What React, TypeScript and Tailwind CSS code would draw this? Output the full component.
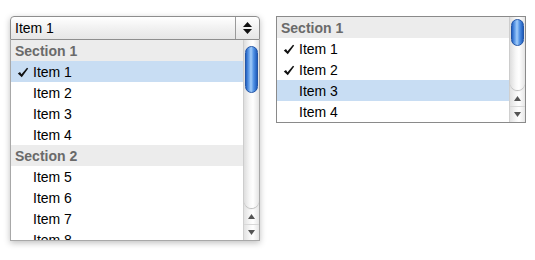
import React from "react";

const font = { fontFamily: '"Liberation Sans", Arial, sans-serif' };

function Check() {
  return (
    <svg width="12" height="11" viewBox="0 0 12 11" className="shrink-0">
      <path d="M0.8 6.4 L3 5 L4.5 7.3 L10 0.8 L11.2 1.6 L4.8 10.2 Z" fill="#111" />
    </svg>
  );
}

function Section({ label }: { label: string }) {
  return (
    <div className="h-[21px] shrink-0 flex items-center pt-[1px] pl-[4px] bg-[#ececec] text-[14px] font-bold text-[#6a6a6a]">
      {label}
    </div>
  );
}

function Row({ label, checked, selected }: { label: string; checked?: boolean; selected?: boolean }) {
  return (
    <div className={`h-[21px] shrink-0 flex items-center pt-[1px] text-[14px] text-black ${selected ? "bg-[#c8ddf3]" : "bg-white"}`}>
      <div className="w-[22px] flex justify-end pr-[4px]">{checked ? <Check /> : null}</div>
      <span>{label}</span>
    </div>
  );
}

function Tri({ up }: { up?: boolean }) {
  return (
    <svg width="7" height="5" viewBox="0 0 7 5">
      <path d={up ? "M3.5 0 L7 5 L0 5 Z" : "M0 0 L7 0 L3.5 5 Z"} fill="#555" />
    </svg>
  );
}

function Scrollbar({ thumbTop, thumbH }: { thumbTop: number; thumbH: number }) {
  return (
    <div className="w-[16px] h-full flex flex-col border-l border-[#d0d0d0] bg-[linear-gradient(90deg,#e2e2e2,#f7f7f7_40%,#ffffff_60%,#e6e6e6)]">
      <div className="flex-1 flex flex-col rounded-b-[8px] shadow-[0_1px_1px_#b8b8b8] bg-[linear-gradient(90deg,#dedede,#f8f8f8_40%,#ffffff_60%,#e4e4e4)]">
        <div style={{ height: thumbTop }} />
        <div
          className="mx-[1px] rounded-full border border-[#2456a6] bg-[linear-gradient(90deg,#2262c4,#6fa8ee_30%,#a3cdf9_45%,#4f90e4_70%,#1f5cbb)]"
          style={{ height: thumbH }}
        />
      </div>
      <div className="h-[16px] flex items-center justify-center border-b border-[#d8d8d8] mt-[1px]">
        <Tri up />
      </div>
      <div className="h-[15px] flex items-center justify-center">
        <Tri />
      </div>
    </div>
  );
}

export default function App() {
  return (
    <div className="w-[535px] h-[260px] bg-white flex items-start pl-[10px] pt-[16px] gap-[16px]" style={font}>
      {/* Popup combo */}
      <div className="w-[250px] flex flex-col shadow-[0_2px_6px_rgba(0,0,0,0.25)] rounded-t-[4px]">
        <div className="h-[24px] flex border border-[#8e8e8e] rounded-t-[4px] bg-[linear-gradient(180deg,#ffffff,#f1f1f1_50%,#e6e6e6)]">
          <div className="flex-1 flex items-center pl-[4px] text-[14px] text-black">Item 1</div>
          <div className="w-[24px] border-l border-[#9a9a9a] flex flex-col items-center justify-center">
            <svg width="9" height="12" viewBox="0 0 9 12">
              <path d="M4.5 0 L9 5 L0 5 Z" fill="#111" />
              <path d="M0 7 L9 7 L4.5 12 Z" fill="#111" />
            </svg>
          </div>
        </div>
        <div className="h-[201px] flex border-x border-b border-[#a8a8a8] overflow-hidden bg-white">
          <div className="flex-1 flex flex-col overflow-hidden">
            <Section label="Section 1" />
            <Row label="Item 1" checked selected />
            <Row label="Item 2" />
            <Row label="Item 3" />
            <Row label="Item 4" />
            <Section label="Section 2" />
            <Row label="Item 5" />
            <Row label="Item 6" />
            <Row label="Item 7" />
            <Row label="Item 8" />
          </div>
          <Scrollbar thumbTop={6} thumbH={47} />
        </div>
      </div>

      {/* List box */}
      <div className="w-[250px] h-[107px] flex border border-[#8a8a8a] bg-white overflow-hidden">
        <div className="flex-1 flex flex-col overflow-hidden">
          <Section label="Section 1" />
          <Row label="Item 1" checked />
          <Row label="Item 2" checked />
          <Row label="Item 3" selected />
          <Row label="Item 4" />
        </div>
        <Scrollbar thumbTop={2} thumbH={27} />
      </div>
    </div>
  );
}
